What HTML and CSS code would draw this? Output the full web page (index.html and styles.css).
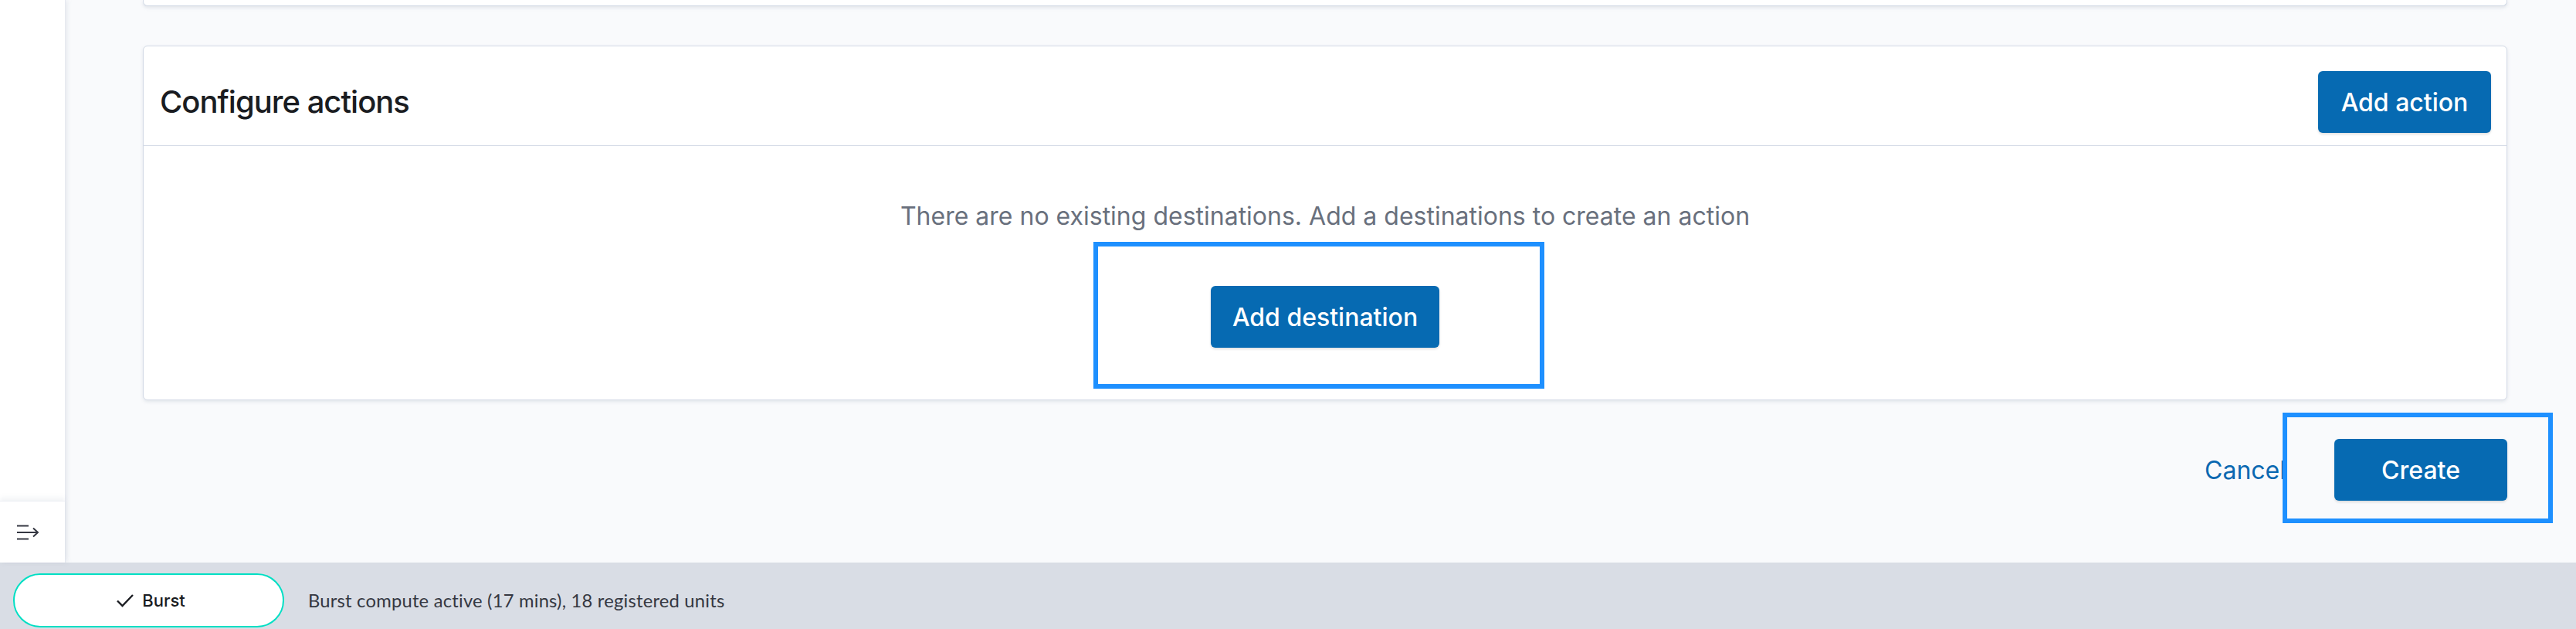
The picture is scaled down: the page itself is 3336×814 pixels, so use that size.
FILE: index.html
```html
<!DOCTYPE html>
<html lang="en">
<head>
<meta charset="utf-8">
<title>Configure actions</title>
<link rel="stylesheet" href="styles.css">
</head>
<body>
<div class="app">
  <div class="main">
    <aside class="sidebar">
      <div class="sidebar-fill"></div>
      <button class="collapse" aria-label="Expand navigation">
        <svg class="collapse-icon" width="30" height="20" viewBox="0 0 30 20" fill="none" stroke="#343741" stroke-width="2" stroke-linecap="butt">
          <path d="M0 1.5H15"/>
          <path d="M0 10H27"/>
          <path d="M0 18.5H15"/>
          <path d="M21 4.5L27 10L21 15.5" stroke-linejoin="miter"/>
        </svg>
      </button>
    </aside>
    <main class="content">
      <div class="prev-card"></div>
      <section class="card">
        <header class="card-header">
          <h2 class="card-title">Configure actions</h2>
          <button class="btn">Add action</button>
        </header>
        <div class="card-body">
          <p class="empty-text">There are no existing destinations. Add a destinations to create an action</p>
          <button class="btn">Add destination</button>
        </div>
      </section>
      <div class="form-actions">
        <button class="btn-empty">Cancel</button>
        <button class="btn">Create</button>
      </div>
    </main>
  </div>
  <footer class="statusbar">
    <div class="pill">
      <svg class="check" width="22" height="17" viewBox="0 0 22 17" fill="none" stroke="#1a1c21" stroke-width="2.4">
        <path d="M1 8.5L7.5 15L21 1"/>
      </svg>
      <span class="pill-label">Burst</span>
    </div>
    <span class="status-text">Burst compute active (17 mins), 18 registered units</span>
  </footer>
  <div class="highlight hl-destination"></div>
  <div class="highlight hl-create"></div>
</div>
</body>
</html>
```

FILE: styles.css
```css
* { box-sizing: border-box; }

html, body {
  margin: 0;
  padding: 0;
}

body {
  width: 3336px;
  height: 814px;
  overflow: hidden;
  font-family: "Inter", "Liberation Sans", sans-serif;
  background: #f9fafc;
}

.app {
  position: relative;
  width: 3336px;
  height: 814px;
  display: grid;
  grid-template-rows: 728px 86px;
}

.main {
  display: flex;
  min-height: 0;
}

.sidebar {
  width: 84px;
  flex: 0 0 84px;
  background: #ffffff;
  display: flex;
  flex-direction: column;
  box-shadow: 1px 0 0 #e6e9f0, 3px 0 6px rgba(152, 162, 179, 0.18);
  position: relative;
  z-index: 1;
}

.sidebar-fill {
  flex: 1;
}

.collapse {
  height: 80px;
  border: 0;
  border-top: 1px solid #eceef3;
  background: #ffffff;
  box-shadow: 0 -4px 6px rgba(152, 162, 179, 0.12);
  display: flex;
  align-items: center;
  padding: 0 0 0 22px;
  margin: 0;
}

.collapse-icon {
  display: block;
}

.content {
  flex: 1;
  padding: 0 89px 0 101px;
  display: flex;
  flex-direction: column;
}

.prev-card {
  height: 8px;
  background: #ffffff;
  border: 1px solid #d3dae6;
  border-top: 0;
  border-radius: 0 0 6px 6px;
  box-shadow: 0 2px 4px rgba(152, 162, 179, 0.25);
  margin-bottom: 51px;
}

.card {
  background: #ffffff;
  border: 1px solid #d3dae6;
  border-radius: 6px;
  box-shadow: 0 2px 4px rgba(152, 162, 179, 0.22);
}

.card-header {
  display: flex;
  align-items: center;
  justify-content: space-between;
  padding: 32px 20px 16px 21px;
  border-bottom: 1px solid #d3dae6;
}

.card-title {
  margin: 0;
  font-size: 40px;
  font-weight: 500;
  letter-spacing: -1px;
  color: #1a1c21;
  line-height: 48px;
}

.btn {
  height: 80px;
  min-width: 224px;
  padding: 0 28px;
  border: 0;
  border-radius: 6px;
  background: #066ab2;
  color: #ffffff;
  font-family: "Inter", "Liberation Sans", sans-serif;
  font-size: 32px;
  font-weight: 500;
  box-shadow: 0 2px 3px rgba(0, 0, 0, 0.12);
}

.card-body {
  display: flex;
  flex-direction: column;
  align-items: center;
  padding: 67px 20px 67px;
}

.empty-text {
  margin: 0 0 66px;
  font-size: 32px;
  line-height: 48px;
  color: #69707d;
}

.form-actions {
  display: flex;
  justify-content: flex-end;
  align-items: center;
  gap: 47px;
  margin-top: 50px;
}

.btn-empty {
  height: 80px;
  padding: 0 16px;
  border: 0;
  background: transparent;
  color: #0a68b1;
  font-family: "Inter", "Liberation Sans", sans-serif;
  font-size: 32px;
  font-weight: 400;
}

.statusbar {
  background: #d9dde5;
  display: flex;
  align-items: center;
  padding: 14px 0 2px 17px;
  gap: 31px;
}

.pill {
  width: 351px;
  height: 70px;
  border: 2px solid #00dfc4;
  border-radius: 36px;
  background: #ffffff;
  display: flex;
  align-items: center;
  justify-content: center;
  gap: 11px;
  padding-left: 6px;
}

.check {
  display: block;
}

.pill-label {
  font-family: "Inter", "Liberation Sans", sans-serif;
  font-size: 22px;
  font-weight: 500;
  color: #1a1c21;
}

.status-text {
  font-family: "Lato", "Noto Sans", sans-serif;
  font-size: 23.8px;
  color: #343741;
  letter-spacing: 0.2px;
}

.highlight {
  position: absolute;
  border: 6px solid #1e90ff;
  pointer-events: none;
  z-index: 5;
}

.hl-destination {
  left: 1416px;
  top: 313px;
  width: 584px;
  height: 190px;
}

.hl-create {
  left: 2956px;
  top: 534px;
  width: 350px;
  height: 143px;
}
```
